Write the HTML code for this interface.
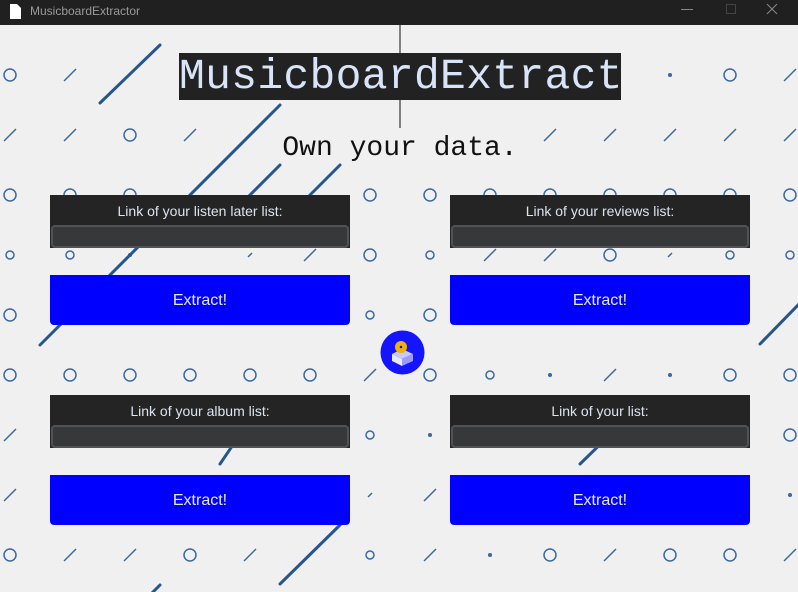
<!DOCTYPE html><html><head><style>
body{margin:0;width:798px;height:592px;overflow:hidden;background:#f0f0f0;font-family:"Liberation Sans",sans-serif;position:relative}
.tb{position:absolute;left:0;top:0;width:798px;height:25px;background:#202020;color:#9a9a9a;font-size:12px}
.p{position:absolute;width:300px;height:53px;background:#242424;color:#dde4f0;font-size:14px;text-align:center}
.p div.t{padding-top:8px;height:22px}
.p div.i{position:absolute;left:1px;top:30px;width:294px;height:19px;background:#37383a;border:2px solid #505256;border-radius:4px}
.b{position:absolute;width:300px;height:50px;background:#0000ff;color:#e6e8ff;font-size:16px;text-align:center;line-height:52px;border-radius:0 0 4px 4px}
</style></head><body>
<div class="tb"><svg style="position:absolute;left:10px;top:4px" width="11" height="15"><path d="M0 0H7L11 4V15H0Z" fill="#fff"/></svg><span style="position:absolute;left:30px;top:4px">MusicboardExtractor</span>
<svg style="position:absolute;left:680px;top:0" width="118" height="25"><path d="M1 9.5H13" stroke="#888"/><path d="M46.5 4.5h9v9h-9z" stroke="#444" fill="none"/><path d="M87 4L97 14M97 4L87 14" stroke="#888"/></svg></div>
<svg style="position:absolute;left:0;top:0" width="798" height="592">
<g stroke="#3a6aa0" stroke-width="1.5" fill="none" id="pat"></g>
<g stroke="#27568c" stroke-width="3" stroke-linecap="round">
<line x1="100" y1="103" x2="160" y2="45"/><line x1="280" y1="105" x2="40" y2="345"/>
<line x1="280" y1="165" x2="230" y2="215"/><line x1="340" y1="165" x2="300" y2="205"/>
<line x1="800" y1="303" x2="760" y2="344"/><line x1="260" y1="405" x2="220" y2="464"/>
<line x1="340" y1="525" x2="280" y2="584"/><line x1="160" y1="585" x2="150" y2="595"/>
<line x1="620" y1="425" x2="580" y2="464"/></g>
<line x1="400" y1="25" x2="400" y2="128" stroke="#111"/>
</svg>
<script>
var g=document.getElementById('pat'),s='';
function add(x,y,t){if(t=='O')s+='<circle cx="'+x+'" cy="'+y+'" r="6"/>';else if(t=='o')s+='<circle cx="'+x+'" cy="'+y+'" r="4"/>';else if(t=='.')s+='<circle cx="'+x+'" cy="'+y+'" r="1.3" fill="#3a6aa0"/>';else if(t=='/')s+='<line x1="'+(x-6)+'" y1="'+(y+6)+'" x2="'+(x+6)+'" y2="'+(y-6)+'"/>';else if(t=='s')s+='<line x1="'+(x-2)+'" y1="'+(y+2)+'" x2="'+(x+2)+'" y2="'+(y-2)+'"/>';}
var cols={75:[[10,'O'],[70,'/'],[670,'.'],[730,'O'],[790,'/']],
135:[[10,'/'],[70,'/'],[130,'O'],[190,'/'],[550,'/'],[610,'/'],[670,'/'],[730,'/'],[790,'/']],
195:[[10,'O'],[70,'O'],[130,'O'],[370,'O'],[430,'O'],[490,'O'],[550,'O'],[610,'O'],[670,'O'],[730,'O'],[790,'O']],
255:[[10,'o'],[70,'o'],[130,'.'],[250,'s'],[310,'/'],[370,'O'],[430,'o'],[490,'/'],[550,'/'],[610,'O'],[670,'s'],[730,'o'],[790,'o']],
315:[[10,'O'],[370,'o'],[430,'O']],
375:[[10,'O'],[70,'O'],[130,'O'],[190,'O'],[250,'O'],[310,'O'],[370,'/'],[430,'O'],[490,'o'],[550,'.'],[610,'/'],[670,'.'],[730,'O'],[790,'O']],
435:[[10,'/'],[370,'o'],[430,'.'],[790,'O']],
495:[[10,'/'],[370,'s'],[430,'/'],[790,'.']],
555:[[10,'O'],[70,'/'],[130,'/'],[190,'O'],[250,'/'],[370,'o'],[430,'/'],[490,'.'],[550,'O'],[610,'/'],[670,'O'],[730,'O'],[790,'/']]};
for(var y in cols)cols[y].forEach(function(c){add(c[0],+y,c[1])});
g.innerHTML=s;
</script>
<div style="position:absolute;left:179px;top:53px;width:442px;height:47px;background:#222;color:#d8e4f8;font:43px/47px 'Liberation Mono',monospace;text-align:center;white-space:nowrap;letter-spacing:0.3px">MusicboardExtract</div>
<div style="position:absolute;left:270px;top:133px;width:260px;text-align:center;font:28px 'Liberation Mono',monospace;color:#111">Own your data.</div>
<div class="p" style="left:50px;top:195px"><div class="t">Link of your listen later list:</div><div class="i"></div></div>
<div class="p" style="left:450px;top:195px"><div class="t">Link of your reviews list:</div><div class="i"></div></div>
<div class="p" style="left:50px;top:395px"><div class="t">Link of your album list:</div><div class="i"></div></div>
<div class="p" style="left:450px;top:395px"><div class="t">Link of your list:</div><div class="i"></div></div>
<div class="b" style="left:50px;top:275px">Extract!</div>
<div class="b" style="left:450px;top:275px">Extract!</div>
<div class="b" style="left:50px;top:475px">Extract!</div>
<div class="b" style="left:450px;top:475px">Extract!</div>
<svg style="position:absolute;left:380px;top:330px" width="45" height="45"><circle cx="22.5" cy="22.5" r="22" fill="#1414ff"/>
<path d="M12 24L22 19L33 24L22 29Z" fill="#c8c8ff"/><path d="M12 24V31L22 36V29Z" fill="#e8e8ff"/><path d="M22 29V36L33 31V24Z" fill="#9a9aff"/>
<circle cx="21" cy="17" r="6" fill="#f0b400"/><circle cx="21" cy="17" r="1.3" fill="#1414ff"/></svg>
</body></html>
